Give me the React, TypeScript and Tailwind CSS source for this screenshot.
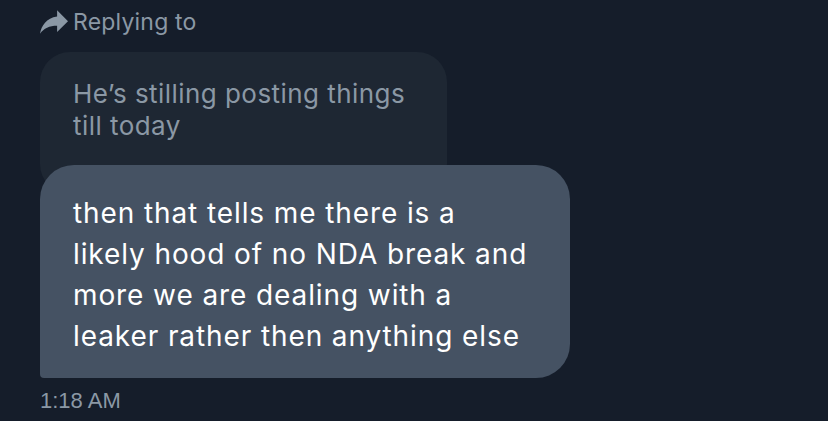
import React from "react";

const ForwardIcon = () => (
  <svg
    viewBox="3 5 18 15"
    width={28}
    height={24}
    className="shrink-0 fill-[#8b98a5]"
    aria-hidden="true"
  >
    <path d="M14 9V5l7 7-7 7v-4.1c-5 0-8.5 1.6-11 5.1 1-5 4-10 11-11z" />
  </svg>
);

export default function App() {
  return (
    <div className="min-h-screen w-full bg-[#151d2a] pl-[40px] pt-[10px] font-['Inter',sans-serif]">
      <div className="flex h-[24px] items-center gap-[5px] text-[#8b98a5]">
        <ForwardIcon />
        <span className="text-[23px] leading-none tracking-[0.2px]">Replying to</span>
      </div>

      <div className="mt-[18px] w-[407px] rounded-[30px] bg-[#1e2733] px-[33px] pb-[52px] pt-[26px] text-[26px] leading-[32px] tracking-[0.45px] text-[#8b98a5]">
        He’s stilling posting things
        <br />
        till today
      </div>

      <div className="relative z-10 -mt-[29px] w-[530px] rounded-[34px] rounded-bl-[4px] bg-[#455263] px-[33px] pb-[21px] pt-[28px] text-[28px] leading-[41px] tracking-[0.9px] text-white">
        then that tells me there is a
        <br />
        likely hood of no NDA break and
        <br />
        more we are dealing with a
        <br />
        leaker rather then anything else
      </div>

      <div className="mt-[12px] font-['Liberation_Sans',Arial,sans-serif] text-[22px] leading-none text-[#8b98a5]">
        1:18 AM
      </div>
    </div>
  );
}
